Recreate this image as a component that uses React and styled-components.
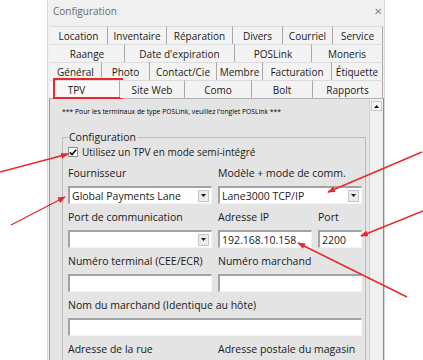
import React from 'react';
import styled, { createGlobalStyle } from 'styled-components';

const GlobalStyle = createGlobalStyle`
  body {
    margin: 0;
    background: #fff;
    font-family: "Open Sans", "Noto Sans", sans-serif;
  }
`;

const tabRows = [
  [['Location', 58], ['Inventaire', 59], ['Réparation', 66], ['Divers', 50], ['Courriel', 50], ['Service', 50]],
  [['Raange', 75], ["Date d'expiration", 110], ['POSLink', 77], ['Moneris', 71]],
  [['Général', 52], ['Photo', 48], ['Contact/Cie', 67], ['Membre', 46], ['Facturation', 69], ['Étiquette', 51]],
  [['TPV', 70], ['Site Web', 65], ['Como', 67], ['Bolt', 61], ['Rapports', 70]],
];

const arrows = [
  [0, 172, 68, 154],
  [11, 225, 65, 197],
  [422, 152, 328, 192],
  [423, 211, 361, 236],
  [407, 297, 298, 243],
];

function DropButton() {
  return (
    <DropBtn>
      <svg width="5" height="3" viewBox="0 0 5 3">
        <path d="M0 0h5L2.5 3z" fill="#111" />
      </svg>
    </DropBtn>
  );
}

export default function App() {
  return (
    <Page>
      <GlobalStyle />
      <Window>
        <TitleBar>
          <span>Configuration</span>
          <Close>✕</Close>
        </TitleBar>

        <Tabs>
          {tabRows.map((row, i) => (
            <TabRow key={i}>
              {row.map(([label, w]) => (
                <Tab key={label} $w={w} $active={label === 'TPV'}>
                  {label}
                </Tab>
              ))}
            </TabRow>
          ))}
        </Tabs>

        <Panel>
          <Content>
            <Note>*** Pour les terminaux de type POSLink, veuillez l'onglet POSLink ***</Note>
            <Group>
              <Legend>Configuration</Legend>
              <CheckRow>
                <Box>
                  <svg width="8" height="7" viewBox="0 0 8 7">
                    <path d="M0.8 3.4 L3 5.6 L7.2 0.8" stroke="#111" strokeWidth="1.7" fill="none" />
                  </svg>
                </Box>
                Utilisez un TPV en mode semi-intégré
              </CheckRow>

              <Grid>
                <Field>
                  <Label>Fournisseur</Label>
                  <Select>
                    <span>Global Payments Lane</span>
                    <DropButton />
                  </Select>
                </Field>
                <Field>
                  <Label>Modèle + mode de comm.</Label>
                  <Select>
                    <span>Lane3000 TCP/IP</span>
                    <DropButton />
                  </Select>
                </Field>

                <Field>
                  <Label>Port de communication</Label>
                  <Select>
                    <span />
                    <DropButton />
                  </Select>
                </Field>
                <Split>
                  <Field>
                    <Label>Adresse IP</Label>
                    <Input>192.168.10.158</Input>
                  </Field>
                  <Field>
                    <Label>Port</Label>
                    <Input>2200</Input>
                  </Field>
                </Split>

                <Field>
                  <Label>Numéro terminal (CEE/ECR)</Label>
                  <Input />
                </Field>
                <Field>
                  <Label>Numéro marchand</Label>
                  <Input />
                </Field>

                <Field $span>
                  <Label>Nom du marchand (Identique au hôte)</Label>
                  <Input />
                </Field>

                <Field>
                  <Label>Adresse de la rue</Label>
                  <Input />
                </Field>
                <Field>
                  <Label>Adresse postale du magasin</Label>
                  <Input />
                </Field>
              </Grid>
            </Group>
          </Content>
          <Scrollbar>
            <ScrollBtn>
              <svg width="5" height="3" viewBox="0 0 5 3">
                <path d="M0 3h5L2.5 0z" fill="#111" />
              </svg>
            </ScrollBtn>
          </Scrollbar>
        </Panel>
      </Window>

      <Overlay width="423" height="360" viewBox="0 0 423 360">
        <defs>
          <marker id="head" markerWidth="8" markerHeight="6" refX="7" refY="3" orient="auto" markerUnits="userSpaceOnUse">
            <path d="M0 0 L8 3 L0 6 z" fill="#e8282c" />
          </marker>
        </defs>
        {arrows.map(([x1, y1, x2, y2], i) => (
          <line key={i} x1={x1} y1={y1} x2={x2} y2={y2} stroke="#e8282c" strokeWidth="1.4" markerEnd="url(#head)" />
        ))}
      </Overlay>
    </Page>
  );
}

// styles
const Page = styled.div`
  position: relative;
  width: 423px;
  height: 360px;
  overflow: hidden;
  padding-left: 47px;
  box-sizing: border-box;
  background: #fff;
`;

const Window = styled.div`
  width: 338px;
  height: 100%;
  box-sizing: border-box;
  display: flex;
  flex-direction: column;
  background: #f0f0f0;
  border-left: 1px solid #d6d6d6;
  border-right: 1px solid #d6d6d6;
`;

const TitleBar = styled.div`
  height: 22px;
  flex: none;
  display: flex;
  align-items: center;
  justify-content: space-between;
  padding: 0 2px 2px 5px;
  color: #6a6a6a;
  font-size: 10px;
`;

const Close = styled.span`
  font-size: 10px;
  color: #8a8a8a;
`;

const Tabs = styled.div`
  margin-top: 2px;
  padding-left: 2px;
  flex: none;
`;

const TabRow = styled.div`
  display: flex;
  height: 18px;
`;

const Tab = styled.div`
  position: relative;
  width: ${(p) => p.$w}px;
  box-sizing: border-box;
  display: flex;
  align-items: center;
  justify-content: center;
  padding-right: ${(p) => (p.$active ? '16px' : '0')};
  font-size: 10px;
  color: #1a1a1a;
  background: ${(p) => (p.$active ? '#f8f8f8' : '#f3f3f3')};
  border-top: 1px solid #dcdcdc;
  border-right: 1px solid #a9a9a9;

  ${(p) =>
    p.$active &&
    `
    &::after {
      content: '';
      position: absolute;
      left: 3px;
      right: -4px;
      top: -3px;
      bottom: -1px;
      border: 2px solid #e8282c;
    }
  `}
`;

const Panel = styled.div`
  flex: 1;
  min-height: 0;
  margin: 0 0 0 1px;
  display: flex;
  background: #e4e4e4;
  border-top: 1px solid #b4b4b4;
  border-left: 1px solid #9a9a9a;
  border-right: 1px solid #8a8a8a;
  overflow: hidden;
`;

const Content = styled.div`
  flex: 1;
  padding: 7px 0 0 12px;
`;

const Note = styled.div`
  font-size: 6.8px;
  line-height: 12px;
  color: #000;
  white-space: nowrap;
`;

const Group = styled.fieldset`
  width: 304px;
  box-sizing: border-box;
  margin: 12px 0 0 0;
  padding: 1px 3px 0 5px;
  border: 1px solid #bcbcbc;
  border-bottom: none;
`;

const Legend = styled.legend`
  padding: 0 1px;
  margin-left: 0;
  font-size: 10.5px;
  line-height: 14px;
  color: #1a1a1a;
`;

const CheckRow = styled.div`
  display: flex;
  align-items: center;
  gap: 4px;
  height: 14px;
  font-size: 10px;
  color: #1a1a1a;
  white-space: nowrap;
`;

const Box = styled.span`
  width: 10px;
  height: 10px;
  box-sizing: border-box;
  display: flex;
  align-items: center;
  justify-content: center;
  background: #fff;
  border: 1px solid #8c8c8c;
`;

const Grid = styled.div`
  display: grid;
  grid-template-columns: 144px 144px;
  column-gap: 6px;
  row-gap: 7px;
  margin-top: 8px;
`;

const Split = styled.div`
  display: grid;
  grid-template-columns: 94px 44px;
  column-gap: 6px;
`;

const Field = styled.div`
  display: flex;
  flex-direction: column;
  grid-column: ${(p) => (p.$span ? '1 / span 2' : 'auto')};
`;

const Label = styled.div`
  height: 13px;
  line-height: 13px;
  margin-bottom: 6px;
  font-size: 10.5px;
  color: #1a1a1a;
  white-space: nowrap;
`;

const Input = styled.div`
  height: 18px;
  box-sizing: border-box;
  display: flex;
  align-items: center;
  padding-left: 2px;
  background: #fff;
  border-style: solid;
  border-width: 2px 1px 1px 2px;
  border-color: #a2a2a2 #f4f4f4 #f4f4f4 #a2a2a2;
  font-size: 10.5px;
  color: #1a1a1a;
  white-space: nowrap;
`;

const Select = styled(Input)`
  justify-content: space-between;
  padding-right: 2px;
`;

const DropBtn = styled.span`
  width: 11px;
  height: 12px;
  box-sizing: border-box;
  display: flex;
  align-items: center;
  justify-content: center;
  background: #ececec;
  border: 1px solid #c4c4c4;
`;

const Scrollbar = styled.div`
  width: 13px;
  flex: none;
  padding-top: 2px;
  display: flex;
  flex-direction: column;
  align-items: center;
  background: #f0f0f0;
  border-left: 1px solid #cfcfcf;
`;

const ScrollBtn = styled.span`
  width: 11px;
  height: 10px;
  box-sizing: border-box;
  display: flex;
  align-items: center;
  justify-content: center;
  background: #f6f6f6;
  border: 1px solid #c8c8c8;
`;

const Overlay = styled.svg`
  position: absolute;
  left: 0;
  top: 0;
  pointer-events: none;
`;
